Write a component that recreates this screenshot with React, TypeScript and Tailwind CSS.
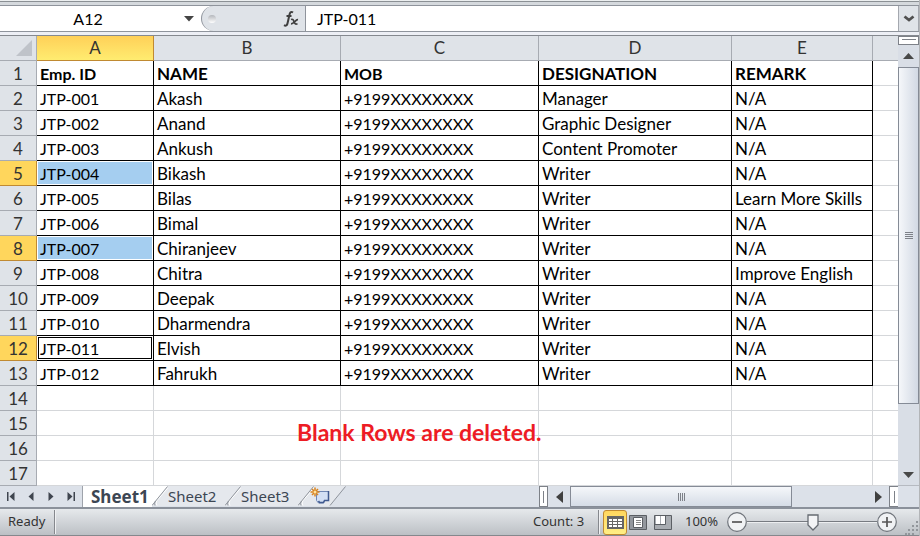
import React from "react";

const columns = [
  { name: "A", width: "w-[117px]", text: "text-base leading-[25px]" },
  { name: "B", width: "w-[187px]", text: "text-[17px] leading-[25px]" },
  { name: "C", width: "w-[198px]", text: "text-base leading-[25px]" },
  { name: "D", width: "w-[193px]", text: "text-[17px] leading-[25px]" },
  { name: "E", width: "w-[141px]", text: "text-[17px] leading-[25px]" },
];

const people = [
  ["Emp. ID", "NAME", "MOB", "DESIGNATION", "REMARK"],
  ["JTP-001", "Akash", "+9199XXXXXXXX", "Manager", "N/A"],
  ["JTP-002", "Anand", "+9199XXXXXXXX", "Graphic Designer", "N/A"],
  ["JTP-003", "Ankush", "+9199XXXXXXXX", "Content Promoter", "N/A"],
  ["JTP-004", "Bikash", "+9199XXXXXXXX", "Writer", "N/A"],
  ["JTP-005", "Bilas", "+9199XXXXXXXX", "Writer", "Learn More Skills"],
  ["JTP-006", "Bimal", "+9199XXXXXXXX", "Writer", "N/A"],
  ["JTP-007", "Chiranjeev", "+9199XXXXXXXX", "Writer", "N/A"],
  ["JTP-008", "Chitra", "+9199XXXXXXXX", "Writer", "Improve English"],
  ["JTP-009", "Deepak", "+9199XXXXXXXX", "Writer", "N/A"],
  ["JTP-010", "Dharmendra", "+9199XXXXXXXX", "Writer", "N/A"],
  ["JTP-011", "Elvish", "+9199XXXXXXXX", "Writer", "N/A"],
  ["JTP-012", "Fahrukh", "+9199XXXXXXXX", "Writer", "N/A"],
];

const rowNumbers = Array.from({ length: 17 }, (_, i) => i + 1);
const marked = [5, 8, 12];

function FormulaBar() {
  return (
    <div className="flex h-[27px] border-y border-[#8f949c] bg-[#dfe3e8]">
      <div className="flex w-[201px] items-center bg-white">
        <input
          aria-label="Name box"
          defaultValue="A12"
          className="h-full w-[176px] bg-transparent text-center text-base text-black outline-none"
        />
        <button aria-label="Name list" className="flex h-full grow items-center justify-center">
          <svg width="10" height="6" viewBox="0 0 10 6">
            <path d="M0 0h10L5 5.500z" fill="#444" />
          </svg>
        </button>
      </div>
      <div className="flex w-[104px] bg-white">
        <div className="flex grow items-center justify-between rounded-l-full border-l border-[#8f949c] bg-[#dfe3e8] pr-1.5 pl-1.5">
          <span className="h-2 w-2 rounded-full bg-gradient-to-b from-[#b4b7bc] to-white" />
          <button aria-label="Insert function" className="h-full">
            <svg width="16" height="18" viewBox="0 0 16 18" fill="none" stroke="#3f3f3f">
              <path d="M10 2.500C8 1 6.800 2.500 6.300 5.500L4.600 13C4.200 15.500 2.800 16.200 1 15.200M3.500 6h5" strokeWidth="2" />
              <path d="M8 9.500c2-.8 2.300.2 3 2.300s1.500 2.700 3.500 1.900M15 9.700c-2.500-.4-4 4.300-7 4.100" strokeWidth="1.700" />
            </svg>
          </button>
        </div>
      </div>
      <input
        aria-label="Formula"
        defaultValue="JTP-011"
        className="min-w-0 grow border-l border-[#8f949c] bg-white pl-[11px] text-base text-black outline-none"
      />
      <button
        aria-label="Expand formula bar"
        className="flex w-[21px] items-center justify-center border-x border-[#a4a8af] bg-[#dfe3e8]"
      >
        <svg width="12" height="8" viewBox="0 0 12 8" fill="none">
          <path d="M1.500 1.500 6 5l4.500-3.500" stroke="#505050" strokeWidth="2.800" />
        </svg>
      </button>
    </div>
  );
}

function SheetGrid() {
  return (
    <table className="w-full table-fixed border-separate border-spacing-0 text-[17px] leading-6">
      <colgroup>
        <col className="w-[37px]" />
        {columns.map((c) => (
          <col key={c.name} className={c.width} />
        ))}
        <col />
      </colgroup>
      <thead>
        <tr className="h-[25px]">
          <th className="border-r border-b border-[#a7abb2] bg-[#dfe3e8] p-0">
            <svg width="16" height="16" viewBox="0 0 16 16" className="ml-4">
              <path d="M16 0v16H0z" fill="#bfc3c9" />
            </svg>
          </th>
          {columns.map((c) => (
            <th
              key={c.name}
              scope="col"
              className={
                c.name === "A"
                  ? "border-r border-b border-[#c08a32] bg-gradient-to-b from-[#ffd058] to-[#ffec70] p-0 font-normal text-[#333]"
                  : "border-r border-b border-[#a7abb2] bg-[#dfe3e8] p-0 font-normal text-[#333]"
              }
            >
              {c.name}
            </th>
          ))}
          <th className="border-b border-[#a7abb2] bg-[#dfe3e8] p-0" />
        </tr>
      </thead>
      <tbody>
        {rowNumbers.map((n) => {
          const person = people[n - 1];
          return (
            <tr key={n} className="h-[25px]">
              <th
                scope="row"
                className={
                  marked.includes(n)
                    ? "border-r border-b border-[#c08a32] bg-[#ffd65c] p-0 font-normal text-[#333]"
                    : "border-r border-b border-[#a7abb2] bg-[#dfe3e8] p-0 font-normal text-[#333]"
                }
              >
                <div className="h-6 leading-[25px]">{n}</div>
              </th>
              {columns.map((c, i) => {
                const line = person ? "border-black" : "border-[#d5d7da]";
                const weight = n === 1 ? "font-bold" : "font-normal";
                let inner = `h-6 pl-[3px] ${c.text}`;
                if (i === 0 && n === 12) inner = "m-px h-[22px] border border-black pl-px text-base leading-[21px]";
                else if (i === 0 && marked.includes(n)) inner = "m-px h-[22px] bg-[#a5cef0] pl-0.5 text-base leading-[23px]";
                return (
                  <td key={c.name} className={`border-r border-b p-0 whitespace-nowrap text-black ${line} ${weight}`}>
                    <div className={inner}>{person ? person[i] : ""}</div>
                  </td>
                );
              })}
              <td className="border-b border-[#d5d7da] p-0" />
            </tr>
          );
        })}
      </tbody>
    </table>
  );
}

function VerticalScroll() {
  return (
    <div className="flex w-[21px] shrink-0 flex-col items-center border-b border-[#b6bac1] bg-[#d9dee6]">
      <div className="flex h-[9px] w-full items-center justify-center border border-[#7d8188] bg-white">
        <div className="h-[3px] w-3.5 border-t border-[#7d8188]" />
      </div>
      <button aria-label="Scroll up" className="flex h-[22px] w-full items-center justify-center">
        <svg width="11" height="6" viewBox="0 0 11 6"><path d="M0 6h11L5.500 0z" fill="#484848" /></svg>
      </button>
      <div className="flex h-[337px] w-full flex-col items-center justify-center gap-px border border-[#858b96] bg-gradient-to-r from-[#f5f7fa] to-[#d2d9e4]">
        <div className="h-px w-2 bg-[#7d8188]" />
        <div className="h-px w-2 bg-[#7d8188]" />
        <div className="h-px w-2 bg-[#7d8188]" />
        <div className="h-px w-2 bg-[#7d8188]" />
      </div>
      <div className="grow" />
      <button aria-label="Scroll down" className="flex h-5 w-full items-center justify-center">
        <svg width="11" height="6" viewBox="0 0 11 6"><path d="M0 0h11L5.500 6z" fill="#484848" /></svg>
      </button>
    </div>
  );
}

function NavButton({ label, path }: { label: string; path: string }) {
  return (
    <button aria-label={label} className="flex h-full w-5 items-center justify-center">
      <svg width="8" height="9" viewBox="0 0 8 9"><path d={path} fill="#3f454f" /></svg>
    </button>
  );
}

function SlantEdge({ afterActive = false }: { afterActive?: boolean }) {
  return (
    <svg width="16" height="20" viewBox="0 0 16 20" className="shrink-0">
      <path d="M0 0h16v20H0z" fill="#e5e8ed" />
      {afterActive && <path d="M0 0h16L0 19z" fill="#fff" />}
      <path d="M16 .5 4 14.500Q2 17 4 19.500" fill="none" stroke="#fff" transform="translate(1 0)" />
      <path d="M15.500.5 0 19.500M3.500 15Q2 17 3 19.500" fill="none" stroke="#8f949c" />
    </svg>
  );
}

function BottomBar() {
  return (
    <div className="flex h-[21px] bg-[#dce1e9] text-[#3c4653]">
      <div className="flex w-[83px] items-center border-r border-[#9ea3ab] pl-px">
        <NavButton label="First sheet" path="M0 0h1.500v9H0zM7.500 0v9L2.500 4.500z" />
        <NavButton label="Previous sheet" path="M6.500 0v9L1.500 4.500z" />
        <NavButton label="Next sheet" path="M1.500 0v9l5-4.500z" />
        <NavButton label="Last sheet" path="M6.500 0H8v9H6.500zM.5 0v9l5-4.500z" />
      </div>
      <div role="tablist" className="flex text-[15px] leading-5 font-['Noto_Sans',sans-serif]">
        <button role="tab" aria-selected="true" className="h-full w-[69px] bg-white pl-2 text-left text-[17px] font-bold whitespace-nowrap">Sheet1</button>
        <SlantEdge afterActive />
        <button role="tab" aria-selected="false" className="h-5 w-[57px] bg-[#e5e8ed] text-left whitespace-nowrap">Sheet2</button>
        <SlantEdge />
        <button role="tab" aria-selected="false" className="h-5 w-[57px] bg-[#e5e8ed] text-left whitespace-nowrap">Sheet3</button>
        <SlantEdge />
        <button aria-label="Insert sheet" className="flex h-5 w-8">
          <svg width="32" height="20" viewBox="0 0 32 20" className="overflow-visible">
            <path d="M0 0H31L16 20H0z" fill="#e5e8ed" />
            <path d="M31.500 .5 16 19.500" stroke="#8f949c" />
            <path d="M2.500 5.500h12v9h-4l-1 2.500H4.500l-2-2.500z" fill="#d3e0f5" stroke="#7088b5" />
            <path d="M14.500 5v9.500h-4l-1 2h-4l-1-1.500" stroke="#405a90" fill="none" strokeWidth="1.500" />
            <path d="M-2 3l6 6M4 3l-6 6M1 1.500v9M-3.500 6h9" stroke="#d9841f" strokeWidth="1.500" />
            <circle cx="1" cy="6" r="1.500" fill="#ffe3a0" />
          </svg>
        </button>
      </div>
      <div className="grow" />
      <div className="flex w-[359px] shrink-0">
        <div className="flex w-[9px] items-center justify-center border border-[#7d8188] bg-white">
          <div className="h-3 w-px bg-[#7d8188]" />
        </div>
        <button aria-label="Scroll left" className="flex w-[22px] items-center justify-center">
          <svg width="7" height="12" viewBox="0 0 7 12"><path d="M7 0v12L0 6z" fill="#404040" /></svg>
        </button>
        <div className="flex w-[222px] items-center justify-center gap-px border border-[#858b96] bg-gradient-to-b from-[#f5f7fa] to-[#d5dce6]">
          <div className="h-2 w-px bg-[#7d8188]" />
          <div className="h-2 w-px bg-[#7d8188]" />
          <div className="h-2 w-px bg-[#7d8188]" />
          <div className="h-2 w-px bg-[#7d8188]" />
        </div>
        <div className="grow" />
        <button aria-label="Scroll right" className="flex w-[22px] items-center justify-center">
          <svg width="7" height="12" viewBox="0 0 7 12"><path d="M0 0v12l7-6z" fill="#404040" /></svg>
        </button>
        <div className="flex w-[9px] items-center justify-center border border-r-0 border-[#7d8188] bg-white">
          <div className="h-3 w-px bg-[#7d8188]" />
        </div>
      </div>
      <div className="w-[21px] shrink-0" />
    </div>
  );
}

function ZoomRound({ label, path }: { label: string; path: string }) {
  return (
    <button aria-label={label} className="shrink-0">
      <svg width="20" height="20" viewBox="0 0 20 20">
        <circle cx="10" cy="10" r="9.300" fill="#f0f2f4" stroke="#6f747b" strokeWidth="1.200" />
        <path d={path} stroke="#555" strokeWidth="1.700" />
      </svg>
    </button>
  );
}

function StatusBar() {
  return (
    <div className="flex h-[27px] items-center border-b border-[#85888d] bg-gradient-to-b from-[#e6e9ec] to-[#bcc0c5] text-[13px] text-[#333] font-['Noto_Sans',sans-serif]">
      <span className="w-[54px] pl-2">Ready</span>
      <div className="h-6 w-0.5 border-l border-[#85888d] bg-[#f0f1f3]" />
      <div className="grow" />
      <span className="w-[65px] whitespace-nowrap">Count: 3</span>
      <div className="h-6 w-0.5 border-l border-[#85888d] bg-[#f0f1f3]" />
      <button aria-label="Normal view" className="ml-[3px] flex h-[25px] w-6 items-center justify-center rounded-[3px] border border-[#c08a32] bg-gradient-to-b from-[#ffd75e] to-[#ffee85]">
        <svg width="17" height="13" viewBox="0 0 17 13" className="shrink-0">
          <path d="M0 0h17v13H0z" fill="#656565" />
          <path d="M2 3h3v2H2zM6 3h4v2H6zM11 3h4v2h-4zM2 6h3v2H2zM6 6h4v2H6zM11 6h4v2h-4zM2 9h3v2H2zM6 9h4v2H6zM11 9h4v2h-4z" fill="#fff" />
        </svg>
      </button>
      <button aria-label="Page layout" className="ml-[2px]">
        <svg width="18" height="15" viewBox="0 0 18 15">
          <path d="M.5.5h17v14H.5z" fill="#94989e" stroke="#5b5f64" />
          <path d="M4.500 2.500h9v10h-9z" fill="#fff" stroke="#5b5f64" />
          <path d="M7 5.500h5M7 7.500h5M7 9.500h5" stroke="#888" />
        </svg>
      </button>
      <button aria-label="Page break preview" className="ml-[7px]">
        <svg width="18" height="15" viewBox="0 0 18 15">
          <path d="M.5.5h17v14H.5z" fill="#a9adb2" stroke="#5b5f64" />
          <path d="M2 1h4v8H2zM7 1h4v8H7z" fill="#fff" />
          <path d="M11.500 0v9.500H1" fill="none" stroke="#5b5f64" />
        </svg>
      </button>
      <span className="w-[55px] pl-[13px]">100%</span>
      <ZoomRound label="Zoom out" path="M5 10h10" />
      <label className="relative flex h-5 w-[130px] items-center">
        <span className="h-0.5 w-full border-t border-[#777b81] bg-[#eceef0]" />
        <input type="range" aria-label="Zoom" defaultValue="50" className="absolute inset-0 w-full opacity-0" />
        <svg width="12" height="17" viewBox="0 0 12 17" className="absolute top-0.5 left-[60px]">
          <path d="M1 1h10v10l-5 5-5-5z" fill="#f3f4f6" stroke="#666b72" strokeWidth="1.300" />
        </svg>
      </label>
      <ZoomRound label="Zoom in" path="M5 10h10M10 5v10" />
      <svg width="14" height="14" viewBox="0 0 14 14" className="mt-auto ml-2 shrink-0" fill="#92969b">
        <path d="M11 0h2v2h-2zM7 4h2v2H7zM11 4h2v2h-2zM3 8h2v2H3zM7 8h2v2H7zM11 8h2v2h-2zM0 12h2v2H0zM3 12h2v2H3zM7 12h2v2H7z" />
      </svg>
    </div>
  );
}

export default function App() {
  return (
    <main className="w-full border-r border-[#b3b5b8] bg-white font-[Lato,'Liberation_Sans',sans-serif]">
      <div className="flex h-[5px] flex-col bg-[#d5d9dd]">
        <div className="h-px bg-[#eceff0]" />
        <div className="h-px bg-[#8b9094]" />
      </div>
      <FormulaBar />
      <div className="h-1 border-b border-[#85898f] bg-[#edeff5]" />
      <div className="flex">
        <div className="relative min-w-0 grow">
          <SheetGrid />
          <p className="absolute top-[384px] left-[297px] text-[23px] leading-6 font-bold whitespace-nowrap text-[#ed1c24]">
            Blank Rows are deleted.
          </p>
        </div>
        <VerticalScroll />
      </div>
      <BottomBar />
      <div className="h-0.5 bg-[#8b919b]" />
      <StatusBar />
    </main>
  );
}
